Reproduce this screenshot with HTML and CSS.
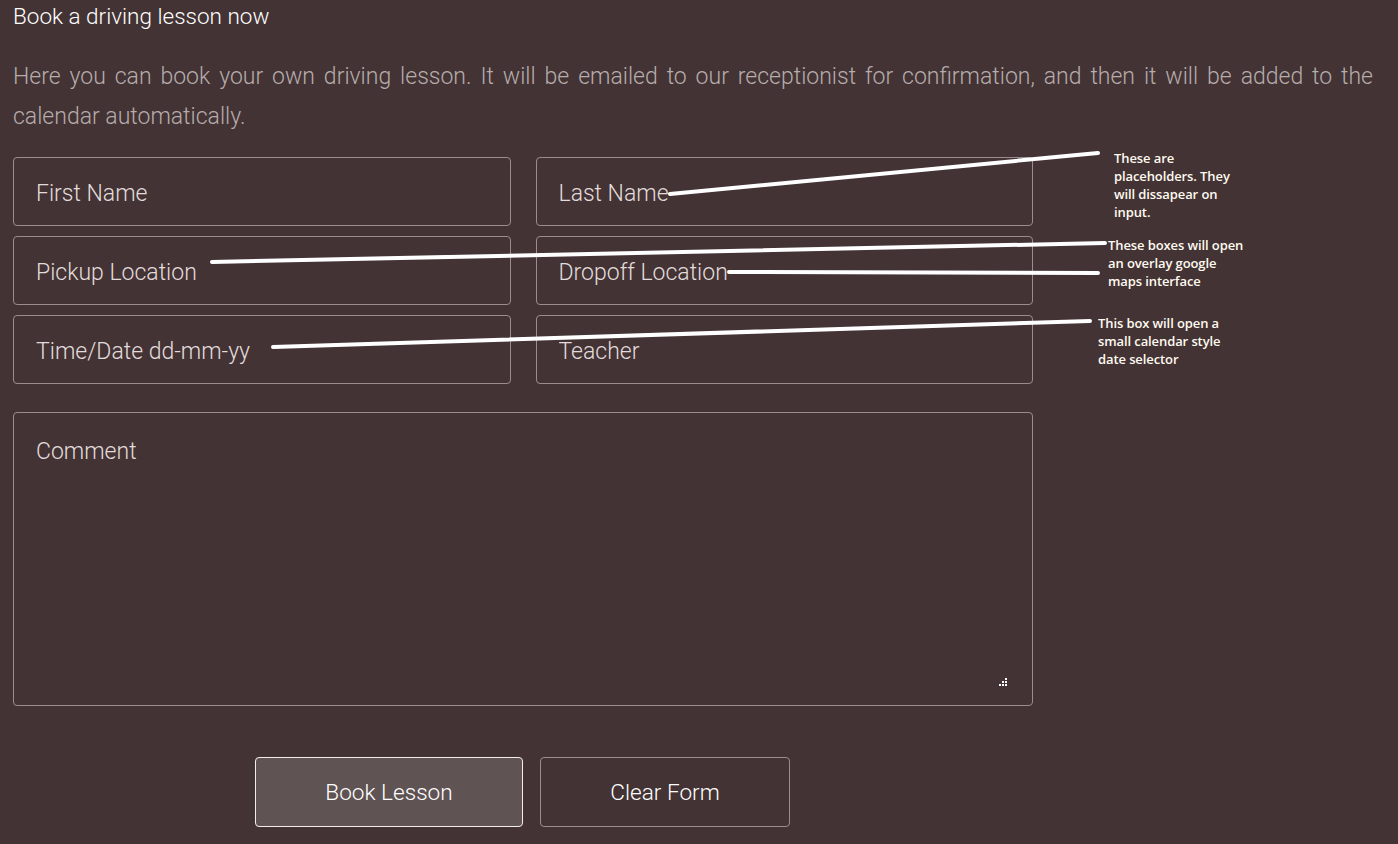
FILE: index.html
```html
<!DOCTYPE html>
<html lang="en">
<head>
<meta charset="utf-8">
<title>Book a driving lesson now</title>
<link rel="stylesheet" href="styles.css">
</head>
<body>
<div class="page">
  <h1 class="title">Book a driving lesson now</h1>
  <p class="intro">Here you can book your own driving lesson. It will be emailed to our receptionist for confirmation, and then it will be added to the calendar automatically.</p>
  <form class="form">
    <div class="grid">
      <input class="field" type="text" placeholder="First Name">
      <input class="field" type="text" placeholder="Last Name">
      <input class="field" type="text" placeholder="Pickup Location">
      <input class="field" type="text" placeholder="Dropoff Location">
      <input class="field" type="text" placeholder="Time/Date dd-mm-yy">
      <input class="field" type="text" placeholder="Teacher">
    </div>
    <div class="comment-wrap">
      <textarea class="comment" placeholder="Comment"></textarea>
      <svg class="grip" width="8" height="8" viewBox="0 0 8 8"><rect x="6" y="0" width="2" height="2" fill="#fff"/><rect x="3" y="3" width="2" height="2" fill="#fff"/><rect x="6" y="3" width="2" height="2" fill="#fff"/><rect x="0" y="6" width="2" height="2" fill="#fff"/><rect x="3" y="6" width="2" height="2" fill="#fff"/><rect x="6" y="6" width="2" height="2" fill="#fff"/></svg>
    </div>
    <div class="actions">
      <button class="btn btn-primary" type="button">Book Lesson</button>
      <button class="btn" type="button">Clear Form</button>
    </div>
  </form>

  <svg class="annot-lines" width="1398" height="844" viewBox="0 0 1398 844">
    <g stroke="#fff" stroke-width="4" stroke-linecap="round" fill="none">
      <line x1="670" y1="194" x2="1098" y2="153"/>
      <line x1="212" y1="262" x2="1105" y2="243"/>
      <line x1="729" y1="272" x2="1098" y2="273"/>
      <line x1="273" y1="347" x2="1090" y2="321"/>
    </g>
  </svg>
  <div class="note note-1">These are<br>placeholders. They<br>will dissapear on<br>input.</div>
  <div class="note note-2">These boxes will open<br>an overlay google<br>maps interface</div>
  <div class="note note-3">This box will open a<br>small calendar style<br>date selector</div>
</div>
</body>
</html>
```

FILE: styles.css
```css
html, body {
  margin: 0;
  padding: 0;
  background: #433334;
}
body {
  width: 1398px;
  height: 844px;
  overflow: hidden;
  font-family: Roboto, "Liberation Sans", sans-serif;
  font-weight: 300;
}
.page {
  position: relative;
  padding: 0 25px 0 13px;
  height: 844px;
  box-sizing: border-box;
}
.title {
  margin: 0;
  padding-top: 1px;
  font-size: 22.5px;
  line-height: 30px;
  font-weight: 300;
  color: #ffffff;
}
.intro {
  margin: 26px 0 0 0;
  font-size: 23px;
  line-height: 40px;
  color: #b6acac;
  text-align: justify;
}
.form {
  width: 1020px;
  margin-top: 20px;
}
.grid {
  display: grid;
  grid-template-columns: 1fr 1fr;
  column-gap: 25px;
  row-gap: 10px;
}
.field, .comment {
  box-sizing: border-box;
  background: transparent;
  border: 1px solid #998d8d;
  border-radius: 4px;
  color: #fff;
  font-family: Roboto, "Liberation Sans", sans-serif;
  font-weight: 300;
  font-size: 23px;
  padding: 0 0 0 22px;
  outline: none;
}
.field {
  height: 69px;
  padding-top: 3px;
}
.field::placeholder, .comment::placeholder {
  color: #e2dcdc;
  opacity: 1;
}
.comment-wrap {
  position: relative;
  margin-top: 28px;
}
.comment {
  display: block;
  width: 100%;
  height: 294px;
  resize: none;
  padding-top: 25px;
  line-height: 28px;
}
.grip {
  position: absolute;
  right: 26px;
  bottom: 20px;
}
.actions {
  display: flex;
  gap: 17px;
  margin-top: 51px;
  margin-left: 242px;
}
.btn {
  height: 70px;
  width: 250px;
  box-sizing: border-box;
  background: transparent;
  border: 1px solid #998d8d;
  border-radius: 4px;
  color: #fff;
  font-family: Roboto, "Liberation Sans", sans-serif;
  font-weight: 300;
  font-size: 22.6px;
  padding: 0;
}
.btn-primary {
  width: 268px;
  background: #605353;
  border-color: #f3eeee;
}
.annot-lines {
  position: absolute;
  left: 0;
  top: 0;
  pointer-events: none;
}
.note {
  position: absolute;
  font-family: "Open Sans", "Liberation Sans", sans-serif;
  font-size: 13px;
  font-weight: 600;
  line-height: 18px;
  color: #fffaf0;
  letter-spacing: -0.1px;
}
.note-1 { left: 1114px; top: 149px; }
.note-2 { left: 1108px; top: 236px; }
.note-3 { left: 1098px; top: 314px; }
```
